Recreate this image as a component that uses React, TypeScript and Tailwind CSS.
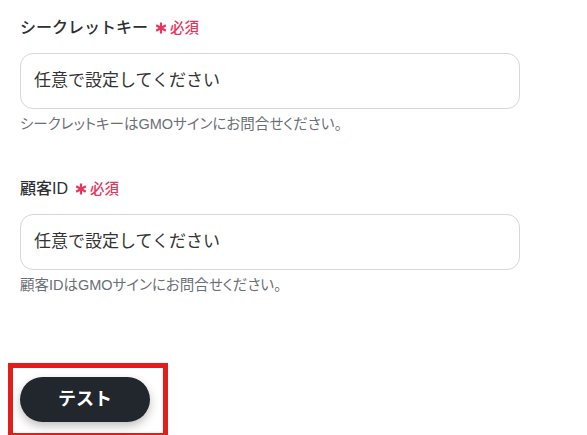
import React from "react";

const Asterisk = () => (
  <svg width="12" height="12" viewBox="0 0 12 12" className="inline-block mr-[3px]">
    <g stroke="#e8345c" strokeWidth="2.2" strokeLinecap="butt">
      <line x1="6" y1="0.5" x2="6" y2="11.5" />
      <line x1="1.2" y1="3.2" x2="10.8" y2="8.8" />
      <line x1="1.2" y1="8.8" x2="10.8" y2="3.2" />
    </g>
  </svg>
);

const Field = ({ label, help }: { label: string; help: string }) => (
  <div className="flex flex-col">
    <div className="flex items-center h-[20px]">
      <span className="text-[16px] leading-[20px] font-medium text-[#2d2f33]">{label}</span>
      <span className="ml-[7px] flex items-center text-[14.5px] leading-[20px] font-medium text-[#e8345c]">
        <Asterisk />
        必須
      </span>
    </div>
    <div className="mt-[15px] w-[500px] h-[56px] rounded-[13px] border border-[#d3d7de] bg-white flex items-center px-[13px]">
      <span className="text-[17px] text-[#333333]">任意で設定してください</span>
    </div>
    <div className="mt-[7px] text-[14.5px] leading-[16px] text-[#6b6f76] [font-feature-settings:'palt']">{help}</div>
  </div>
);

export default function App() {
  return (
    <div
      className="w-[587px] h-[435px] bg-white overflow-hidden relative pl-[20px] pt-[18px]"
      style={{ fontFamily: '"Liberation Sans", "Noto Sans CJK JP", "Noto Sans", sans-serif' }}
    >
      <Field label="シークレットキー" help="シークレットキーはGMOサインにお問合せください。" />
      <div className="h-[47px]" />
      <Field label="顧客ID" help="顧客IDはGMOサインにお問合せください。" />
      <div className="mt-[70px] ml-[-12px] w-[160px] h-[75px] border-[5px] border-[#e31c1c] pl-[7px] pt-[9px]">
        <button className="w-[130px] h-[45px] rounded-full bg-[#22262d] text-white text-[18px] font-bold flex items-center justify-center shadow-[0_4px_10px_rgba(0,0,0,0.25)]">
          テスト
        </button>
      </div>
    </div>
  );
}
